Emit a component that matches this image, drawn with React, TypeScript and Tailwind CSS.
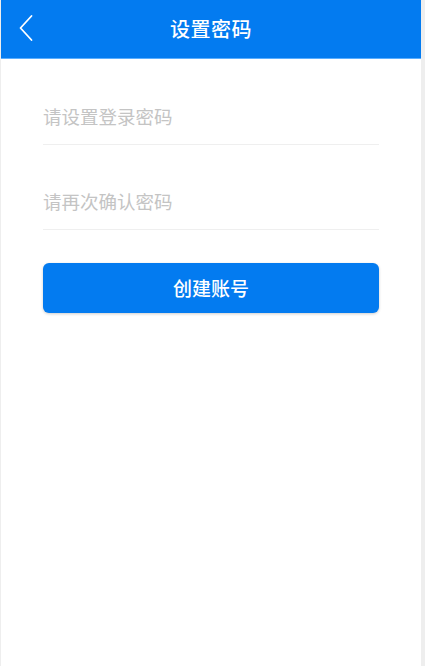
import { useState } from "react"

const font = { fontFamily: '"Noto Sans CJK SC", "Noto Sans", sans-serif' }

export default function App() {
  const [pwd, setPwd] = useState("")
  const [confirm, setConfirm] = useState("")

  return (
    <div className="w-full h-[666px] flex bg-[#eeeeee] pl-px pr-[4px]" style={font}>
      <div className="flex-1 flex flex-col bg-white">
        {/* Header */}
        <div className="relative h-[59px] bg-[#037bf0] border-b border-[#5aaeff] flex items-center justify-center">
          <button className="absolute left-[14px] top-[12px] w-[22px] h-[32px] flex items-center justify-center">
            <svg width="16" height="28" viewBox="0 0 16 28" fill="none">
              <polyline points="13.5,2 2.5,14 13.5,26" stroke="white" strokeWidth="1.8" strokeLinecap="round" strokeLinejoin="round" />
            </svg>
          </button>
          <h1 className="text-white text-[20px] leading-none tracking-[0.5px] font-medium">设置密码</h1>
        </div>

        {/* Form */}
        <div className="px-[42px] pt-[35px] flex flex-col">
          <div className="h-[51px] border-b border-[#efefef] flex items-center pb-[4px]">
            <input
              type="password"
              value={pwd}
              onChange={(e) => setPwd(e.target.value)}
              placeholder="请设置登录密码"
              className="w-full bg-transparent outline-none text-[18.5px] text-[#333] placeholder:text-[#c4c4c4]"
            />
          </div>
          <div className="mt-[34px] h-[51px] border-b border-[#efefef] flex items-center pb-[4px]">
            <input
              type="password"
              value={confirm}
              onChange={(e) => setConfirm(e.target.value)}
              placeholder="请再次确认密码"
              className="w-full bg-transparent outline-none text-[18.5px] text-[#333] placeholder:text-[#c4c4c4]"
            />
          </div>
          <button className="mt-[33px] h-[50px] rounded-[6px] bg-[#037bf0] text-white text-[19px] font-medium shadow-[0_1px_3px_rgba(0,0,0,0.2)]">
            创建账号
          </button>
        </div>
      </div>
    </div>
  )
}
